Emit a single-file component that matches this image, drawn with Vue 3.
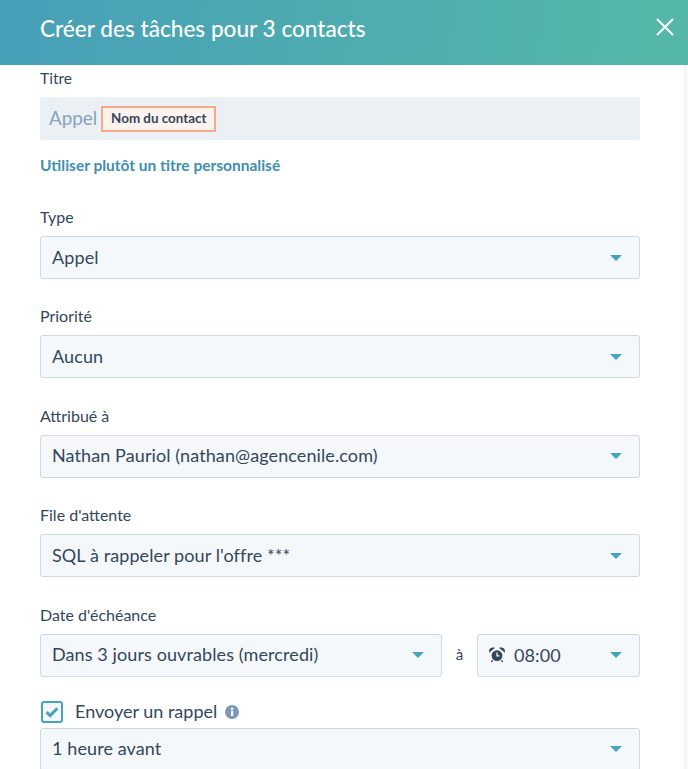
<script setup>
const fields = [
  { label: 'Type', value: 'Appel' },
  { label: 'Priorité', value: 'Aucun' },
  { label: 'Attribué à', value: 'Nathan Pauriol (nathan@agencenile.com)' },
  { label: "File d'attente", value: "SQL à rappeler pour l'offre ***" },
]
</script>

<template>
  <div class="panel">
    <header class="header">
      <h1 class="title">Créer des tâches pour 3 contacts</h1>
      <svg class="close" viewBox="0 0 18 18" aria-label="Fermer">
        <path d="M1 1L17 17M17 1L1 17" stroke="#fff" stroke-width="2" fill="none" />
      </svg>
    </header>
    <main class="body">
      <div class="label first">Titre</div>
      <div class="title-input">
        <span class="prefix">Appel</span>
        <span class="token">Nom du contact</span>
      </div>
      <a class="link">Utiliser plutôt un titre personnalisé</a>

      <section v-for="f in fields" :key="f.label" class="field">
        <div class="label">{{ f.label }}</div>
        <div class="select">
          <span class="value">{{ f.value }}</span>
          <i class="caret"></i>
        </div>
      </section>

      <section class="field">
        <div class="label">Date d'échéance</div>
        <div class="date-row">
          <div class="select grow">
            <span class="value">Dans 3 jours ouvrables (mercredi)</span>
            <i class="caret"></i>
          </div>
          <span class="at">à</span>
          <div class="select time">
            <span class="time-value">
              <svg class="clock" viewBox="0 0 16 16">
                <circle cx="8" cy="8.6" r="5.4" fill="#33475b" />
                <path d="M8 5.6V8.8H10.4" stroke="#fff" stroke-width="1.2" fill="none" />
                <path d="M0.8 4.2A3 3 0 0 1 4.4 1.2L0.8 4.2ZM15.2 4.2A3 3 0 0 0 11.6 1.2L15.2 4.2Z" stroke="#33475b" stroke-width="1.5" fill="#33475b" />
                <path d="M3.6 13.4L2.4 15M12.4 13.4L13.6 15" stroke="#33475b" stroke-width="1.4" />
              </svg>
              08:00
            </span>
            <i class="caret"></i>
          </div>
        </div>
      </section>

      <div class="check-row">
        <span class="checkbox">
          <svg viewBox="0 0 14 12" class="tick">
            <path d="M1.6 6.2L5.2 9.6L12.4 2.2" stroke="#45a3bb" stroke-width="3" fill="none" />
          </svg>
        </span>
        <span class="check-label">Envoyer un rappel</span>
        <svg class="info" viewBox="0 0 14 14">
          <circle cx="7" cy="7" r="7" fill="#7c98b6" />
          <rect x="6" y="6" width="2.2" height="5" fill="#fff" />
          <circle cx="7.1" cy="3.9" r="1.3" fill="#fff" />
        </svg>
      </div>
      <div class="select">
        <span class="value">1 heure avant</span>
        <i class="caret"></i>
      </div>
    </main>
    <div class="scroll-edge"></div>
  </div>
</template>

<style scoped>
.panel {
  position: relative;
  width: 688px;
  height: 769px;
  overflow: hidden;
  background: #fff;
  font-family: Lato, "Open Sans", sans-serif;
  color: #33475b;
}
.header {
  height: 65px;
  box-sizing: border-box;
  padding: 0 14px 8px 40px;
  display: flex;
  align-items: center;
  justify-content: space-between;
  background: linear-gradient(95deg, #479fb9, #55b8a6);
}
.title {
  margin: 0;
  font-size: 22.6px;
  font-weight: 500;
  line-height: 1.2;
  color: #fff;
}
.close {
  width: 18px;
  height: 18px;
  margin-bottom: 3px;
}
.body {
  width: 600px;
  margin-left: 40px;
}
.label {
  font-size: 16px;
  line-height: 20px;
  height: 20px;
  margin-bottom: 9px;
}
.label.first {
  margin-top: 3px;
  font-size: 15.6px;
}
.title-input {
  height: 43px;
  border-radius: 3px;
  background: #eaf0f4;
  display: flex;
  align-items: center;
  padding-left: 9px;
  box-sizing: border-box;
}
.prefix {
  font-size: 18.8px;
  color: #8aa2bc;
  padding-bottom: 2px;
}
.token {
  margin-left: 4px;
  height: 26px;
  box-sizing: border-box;
  padding: 0 8px;
  border: 2px solid #f4a98a;
  background: #fdf3ee;
  font-size: 13.4px;
  font-weight: 700;
  line-height: 21px;
}
.link {
  display: block;
  margin-top: 15px;
  height: 20px;
  font-size: 15.5px;
  line-height: 20px;
  font-weight: 700;
  color: #3e8fae;
}
.field {
  margin-top: 32px;
}
.field + .field {
  margin-top: 27.4px;
}
.select {
  height: 43px;
  box-sizing: border-box;
  border: 1.5px solid #cfd8e3;
  border-radius: 3px;
  background: #f5f8fa;
  display: flex;
  align-items: center;
  justify-content: space-between;
  padding: 0 17px 0 11px;
  font-size: 18px;
  letter-spacing: 0.1px;
}
.value {
  padding-bottom: 2px;
}
.caret {
  width: 0;
  height: 0;
  border-left: 6.5px solid transparent;
  border-right: 6.5px solid transparent;
  border-top: 6.5px solid #45a3bb;
}
.date-row {
  display: flex;
  align-items: center;
}
.grow {
  flex: 1;
}
.at {
  width: 35px;
  text-align: center;
  font-size: 15px;
  padding-bottom: 3px;
}
.time {
  width: 163px;
  flex: none;
}
.time-value {
  display: flex;
  align-items: center;
  gap: 9px;
}
.clock {
  width: 16px;
  height: 16px;
}
.check-row {
  display: flex;
  align-items: center;
  height: 24px;
  margin-top: 23px;
  margin-bottom: 4px;
  padding-left: 1px;
}
.checkbox {
  width: 22px;
  height: 22px;
  box-sizing: border-box;
  border: 2px solid #45a3bb;
  border-radius: 3px;
  background: #f5f8fa;
  display: flex;
  align-items: center;
  justify-content: center;
}
.tick {
  width: 14px;
  height: 12px;
}
.check-label {
  margin-left: 12px;
  font-size: 18px;
  padding-bottom: 2px;
}
.info {
  width: 14px;
  height: 14px;
  margin-left: 8px;
}
.scroll-edge {
  position: absolute;
  top: 65px;
  bottom: 0;
  right: 0;
  width: 4px;
  background: #f8f8f8;
  border-left: 1px solid #efefef;
  box-sizing: border-box;
}
</style>
